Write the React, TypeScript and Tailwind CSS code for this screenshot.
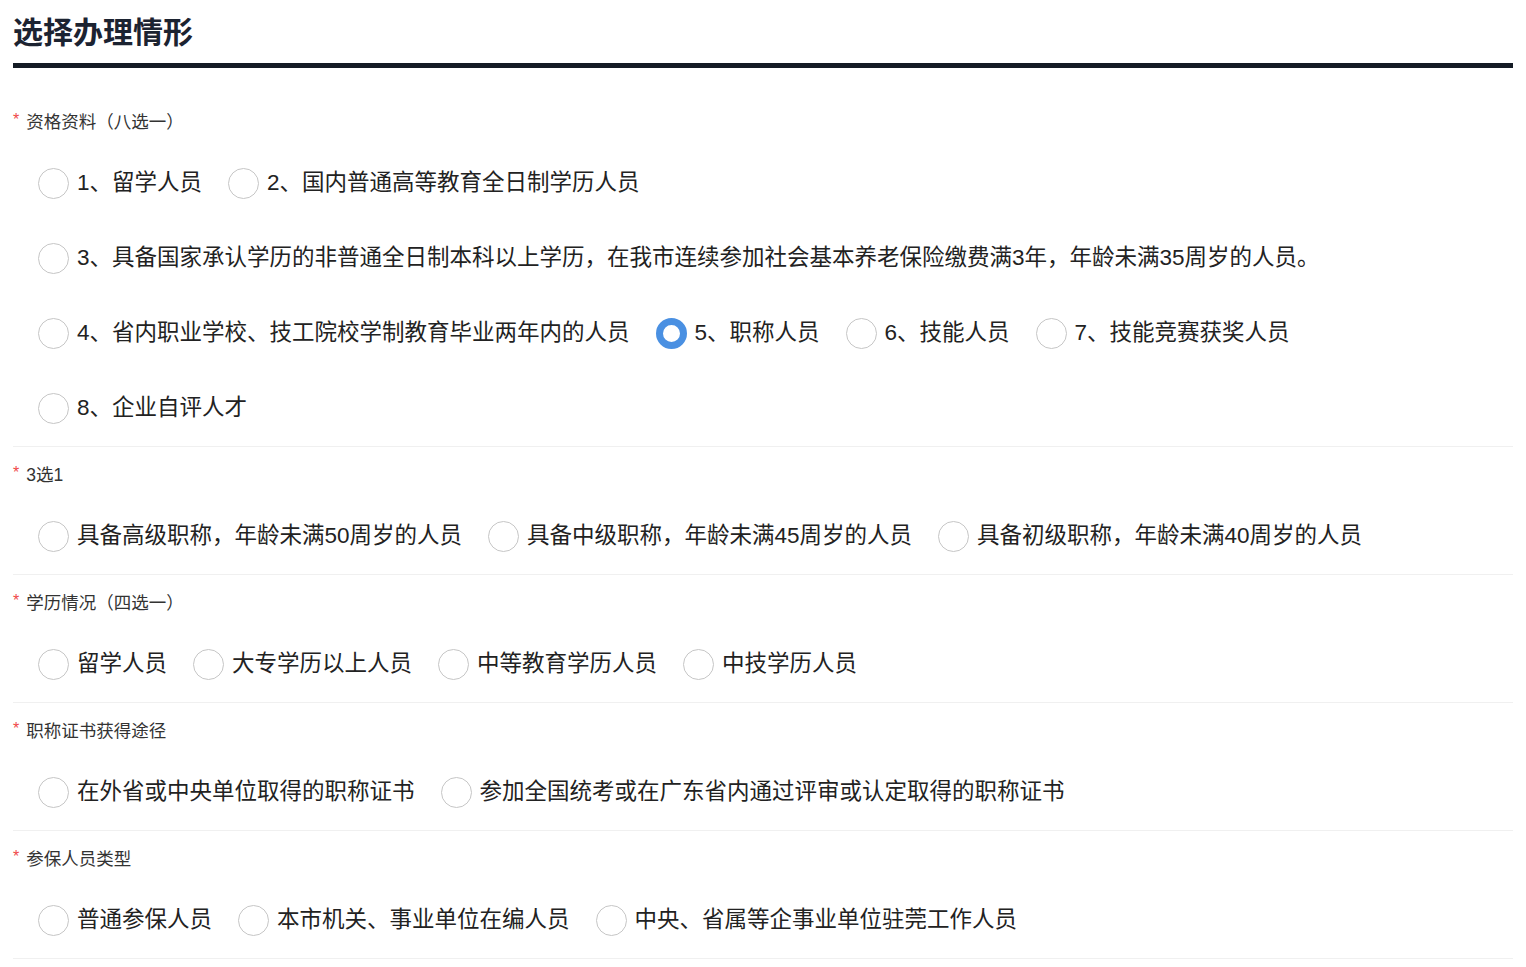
import React, { useState } from 'react';

const sections = [
    {
        key: 'qualification',
        label: '资格资料（八选一）',
        rows: [
            ['1、留学人员', '2、国内普通高等教育全日制学历人员'],
            ['3、具备国家承认学历的非普通全日制本科以上学历，在我市连续参加社会基本养老保险缴费满3年，年龄未满35周岁的人员。'],
            ['4、省内职业学校、技工院校学制教育毕业两年内的人员', '5、职称人员', '6、技能人员', '7、技能竞赛获奖人员'],
            ['8、企业自评人才'],
        ],
    },
    {
        key: 'title',
        label: '3选1',
        rows: [['具备高级职称，年龄未满50周岁的人员', '具备中级职称，年龄未满45周岁的人员', '具备初级职称，年龄未满40周岁的人员']],
    },
    {
        key: 'education',
        label: '学历情况（四选一）',
        rows: [['留学人员', '大专学历以上人员', '中等教育学历人员', '中技学历人员']],
    },
    {
        key: 'certificate',
        label: '职称证书获得途径',
        rows: [['在外省或中央单位取得的职称证书', '参加全国统考或在广东省内通过评审或认定取得的职称证书']],
    },
    {
        key: 'insurance',
        label: '参保人员类型',
        rows: [['普通参保人员', '本市机关、事业单位在编人员', '中央、省属等企事业单位驻莞工作人员']],
    },
];

const Radio = ({ label, checked, onClick }) => (
    <label onClick={onClick} className="flex items-center gap-[8px] cursor-pointer">
        <span
            className={`w-[31px] h-[31px] rounded-full bg-white shrink-0 ${checked ? 'border-[7px] border-[#4a90e2]' : 'border border-[#c6c6c6]'}`}
        />
        <span className="text-[22.5px] leading-none text-[#222]">{label}</span>
    </label>
);

const App = () => {
    const [values, setValues] = useState({ qualification: '5、职称人员' });

    return (
        <div className="min-h-screen bg-white px-[13px] text-[#222]" style={{ fontFamily: '"Liberation Sans", "Noto Sans CJK SC", sans-serif' }}>
            <h1 className="pt-[13px] pb-[10px] text-[30px] leading-[40px] font-bold text-[#1c2331] border-b-[5px] border-[#141b25]">
                选择办理情形
            </h1>

            {sections.map((section, i) => (
                <div key={section.key} className={`border-b border-[#f0f0f0] ${i === 0 ? 'pt-[42px]' : 'pt-[16px]'}`}>
                    <div className="flex items-center h-[24px] text-[17.5px] text-[#333]">
                        <span className="text-[#f04848] mr-[7px] text-[16px] -mt-[4px]">*</span>
                        {section.label}
                    </div>
                    <div className="mt-[12px] pl-[25px]">
                        {section.rows.map((row, r) => (
                            <div key={r} className="flex items-center gap-[26px] h-[75px]">
                                {row.map((opt) => (
                                    <Radio
                                        key={opt}
                                        label={opt}
                                        checked={values[section.key] === opt}
                                        onClick={() => setValues({ ...values, [section.key]: opt })}
                                    />
                                ))}
                            </div>
                        ))}
                    </div>
                </div>
            ))}
        </div>
    );
};

export default App;
